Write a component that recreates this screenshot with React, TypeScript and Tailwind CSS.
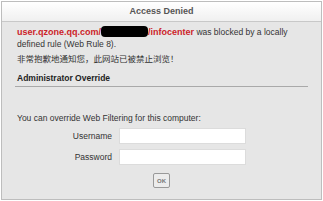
export default function App() {
  return (
    <div className="w-[323px] h-[201px] bg-white p-[1px] font-['Liberation_Sans','Noto_Sans_CJK_SC',sans-serif] text-[8.5px] text-[#333]">
      <div className="h-full flex flex-col border border-[#bdbdbd] bg-[#e6e6e6]">
        <div className="h-[20px] shrink-0 flex items-center justify-center border-b border-[#c8c8c8] bg-gradient-to-b from-white to-[#f0f0f0] text-[#555] font-semibold text-[9px]">
          Access Denied
        </div>
        <div className="px-[15px] pt-[4px]">
          <p className="leading-[12px]">
            <span className="font-bold text-[9px] text-[#cc2229]">user.qzone.qq.com/</span>
            <span className="inline-block w-[47px] h-[11px] align-[-2px] bg-black rounded-[4px]" />
            <span className="font-bold text-[9px] text-[#cc2229]">/infocenter</span> was blocked by a locally
            <br />
            defined rule (Web Rule 8).
          </p>
          <p className="mt-[3px] leading-[12px] text-[8.5px]">非常抱歉地通知您，此网站已被禁止浏览！</p>
          <p className="mt-[7px] leading-[12px] font-bold text-[#222]">Administrator Override</p>
          <div className="mt-[2px] mx-[-2px] border-b border-[#a9a9a9]" />
          <p className="mt-[25px] leading-[12px]">You can override Web Filtering for this computer:</p>
          <div className="mt-[4px] grid grid-cols-[95px_127px] gap-x-[7px] gap-y-[5px] items-center">
            <span className="text-right">Username</span>
            <div className="h-[16px] bg-white border border-[#dcdcdc]" />
            <span className="text-right">Password</span>
            <div className="h-[16px] bg-white border border-[#dcdcdc]" />
          </div>
          <div className="mt-[8px] flex justify-center">
            <button className="w-[17px] h-[15px] border border-[#999] bg-[#ececec] text-[6px] font-bold text-[#777] leading-none rounded-[2px]">OK</button>
          </div>
        </div>
      </div>
    </div>
  );
}
